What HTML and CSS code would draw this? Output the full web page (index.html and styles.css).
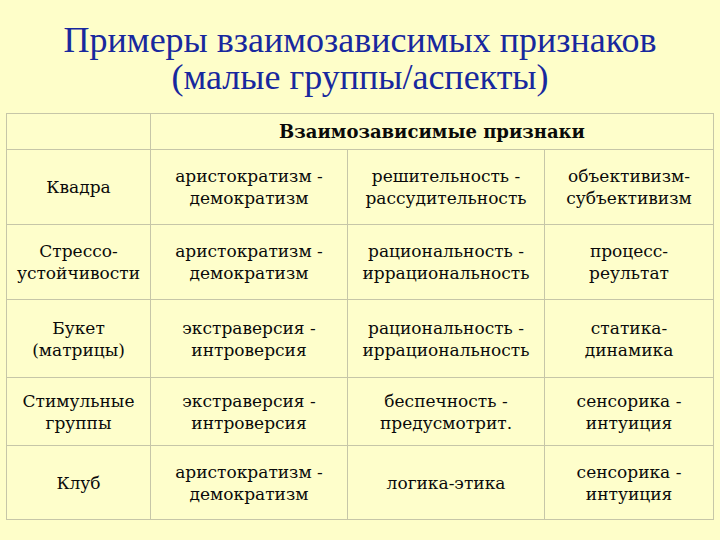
FILE: index.html
```html
<!DOCTYPE html>
<html lang="ru">
<head>
<meta charset="utf-8">
<title>Примеры взаимозависимых признаков</title>
<link rel="stylesheet" href="styles.css">
</head>
<body>
<div class="page">
  <h1 class="title">Примеры взаимозависимых признаков<br>(малые группы/аспекты)</h1>
  <table class="grid">
    <colgroup>
      <col class="c1"><col class="c2"><col class="c3"><col class="c4">
    </colgroup>
    <tr class="r0">
      <td></td>
      <th colspan="3">Взаимозависимые признаки</th>
    </tr>
    <tr class="r1">
      <td>Квадра</td>
      <td>аристократизм -<br>демократизм</td>
      <td>решительность -<br>рассудительность</td>
      <td>объективизм-<br>субъективизм</td>
    </tr>
    <tr class="r2">
      <td>Стрессо-<br>устойчивости</td>
      <td>аристократизм -<br>демократизм</td>
      <td>рациональность -<br>иррациональность</td>
      <td>процесс-<br>реультат</td>
    </tr>
    <tr class="r3">
      <td>Букет<br>(матрицы)</td>
      <td>экстраверсия -<br>интроверсия</td>
      <td>рациональность -<br>иррациональность</td>
      <td>статика-<br>динамика</td>
    </tr>
    <tr class="r4">
      <td>Стимульные<br>группы</td>
      <td>экстраверсия -<br>интроверсия</td>
      <td>беспечность -<br>предусмотрит.</td>
      <td>сенсорика -<br>интуиция</td>
    </tr>
    <tr class="r5">
      <td>Клуб</td>
      <td>аристократизм -<br>демократизм</td>
      <td>логика-этика</td>
      <td>сенсорика -<br>интуиция</td>
    </tr>
  </table>
</div>
</body>
</html>
```
FILE: styles.css
```css
html, body {
  margin: 0;
  padding: 0;
  background: #fefec9;
}
.page {
  width: 720px;
  height: 540px;
  overflow: hidden;
}
.title {
  margin: 0;
  padding-top: 22px;
  font-family: "Liberation Serif", "Times New Roman", serif;
  font-weight: normal;
  font-size: 36px;
  line-height: 37px;
  color: #18289e;
  text-align: center;
}
.grid {
  margin: 17px 0 0 6px;
  width: 707px;
  table-layout: fixed;
  border-collapse: collapse;
  background: #fefecb;
  font-family: "DejaVu Serif", Georgia, serif;
  font-size: 17px;
  line-height: 22px;
  color: #0a0a0a;
}
.c1 { width: 144px; }
.c2 { width: 197px; }
.c3 { width: 197px; }
.c4 { width: 169px; }
.grid td, .grid th {
  border: 1px solid #c6c6a8;
  text-align: center;
  vertical-align: middle;
  padding: 0;
  white-space: nowrap;
}
.grid th {
  font-weight: bold;
  font-size: 18px;
}
.r0 { height: 36px; }
.r1 { height: 75px; }
.r2 { height: 75px; }
.r3 { height: 78px; }
.r4 { height: 68px; }
.r5 { height: 74px; }
```
